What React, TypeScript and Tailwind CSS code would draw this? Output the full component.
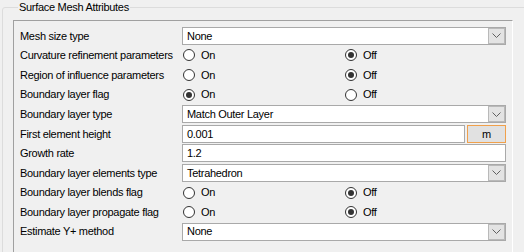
import React from 'react';

type Row =
  | { label: string; kind: 'select'; value: string }
  | { label: string; kind: 'radio'; on: boolean }
  | { label: string; kind: 'text'; value: string; unit?: string };

const rows: Row[] = [
  { label: 'Mesh size type', kind: 'select', value: 'None' },
  { label: 'Curvature refinement parameters', kind: 'radio', on: false },
  { label: 'Region of influence parameters', kind: 'radio', on: false },
  { label: 'Boundary layer flag', kind: 'radio', on: true },
  { label: 'Boundary layer type', kind: 'select', value: 'Match Outer Layer' },
  { label: 'First element height', kind: 'text', value: '0.001', unit: 'm' },
  { label: 'Growth rate', kind: 'text', value: '1.2' },
  { label: 'Boundary layer elements type', kind: 'select', value: 'Tetrahedron' },
  { label: 'Boundary layer blends flag', kind: 'radio', on: false },
  { label: 'Boundary layer propagate flag', kind: 'radio', on: false },
  { label: 'Estimate Y+ method', kind: 'select', value: 'None' },
];

const Select: React.FC<{ value: string }> = ({ value }) => (
  <div className="flex h-[18px] w-full border border-[#a9a9a9] bg-white">
    <div className="flex flex-1 items-center pl-[4px]">{value}</div>
    <div className="flex w-[17px] items-center justify-center border border-[#b9b9b9] bg-[#e3e3e3]">
      <svg width="9" height="5" viewBox="0 0 9 5">
        <polyline points="0.5,0.5 4.5,4.5 8.5,0.5" fill="none" stroke="#606060" strokeWidth="1" />
      </svg>
    </div>
  </div>
);

const Radio: React.FC<{ checked: boolean; label: string }> = ({ checked, label }) => (
  <div className="flex items-center gap-[6px] pl-[1px]">
    <div className="flex h-[12px] w-[12px] items-center justify-center rounded-full border border-[#333333] bg-white">
      {checked && <div className="h-[6px] w-[6px] rounded-full bg-[#333333]" />}
    </div>
    <span>{label}</span>
  </div>
);

const TextField: React.FC<{ value: string; unit?: string }> = ({ value, unit }) => (
  <div className="flex w-full gap-[2px]">
    <div className="flex h-[18px] flex-1 items-center border border-[#a9a9a9] bg-white pl-[4px]">{value}</div>
    {unit && (
      <div className="flex h-[18px] w-[39px] items-center justify-center border border-[#f0a04b] bg-[#e1e1e1]">
        {unit}
      </div>
    )}
  </div>
);

export default function App() {
  return (
    <div
      className="h-[252px] w-[524px] overflow-hidden bg-[#f0f0f0] text-[11px] tracking-[-0.3px] text-black"
      style={{ fontFamily: '"Liberation Sans", Arial, sans-serif' }}
    >
      <fieldset className="ml-[2px] h-[280px] w-[540px] rounded-[3px] border border-[#dcdcdc] pl-[10px]">
        <legend className="ml-[5px] px-[1px] leading-[14px]">Surface Mesh Attributes</legend>
        <div className="mt-[6px] h-[240px] w-[500px] border border-b-white border-l-[#a0a0a0] border-r-white border-t-[#a0a0a0] px-[6px] pt-[5px]">
          <div className="grid grid-cols-[162px_324px] auto-rows-[19.6px]">
            {rows.map((row) => (
              <React.Fragment key={row.label}>
                <div className="flex items-center whitespace-nowrap">{row.label}</div>
                <div className="flex items-center">
                  {row.kind === 'select' && <Select value={row.value} />}
                  {row.kind === 'text' && <TextField value={row.value} unit={row.unit} />}
                  {row.kind === 'radio' && (
                    <div className="grid w-full grid-cols-2">
                      <Radio checked={row.on} label="On" />
                      <Radio checked={!row.on} label="Off" />
                    </div>
                  )}
                </div>
              </React.Fragment>
            ))}
          </div>
        </div>
      </fieldset>
    </div>
  );
}
